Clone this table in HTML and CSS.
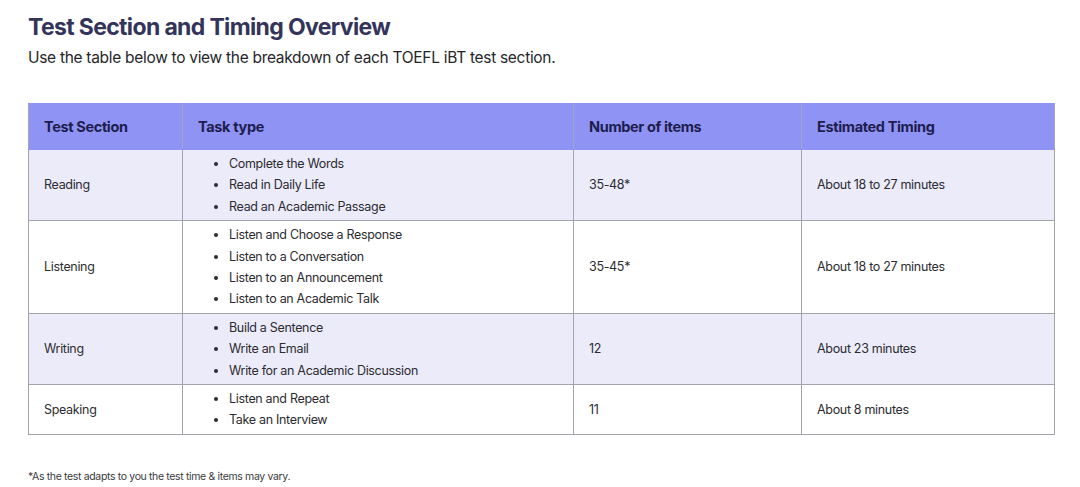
FILE: index.html
```html
<!DOCTYPE html>
<html>
<head>
<meta charset="utf-8">
<link rel="stylesheet" href="styles.css">
</head>
<body>
<div class="page">
  <h1 class="title">Test Section and Timing Overview</h1>
  <p class="intro">Use the table below to view the breakdown of each TOEFL iBT test section.</p>
  <table class="grid">
    <thead>
      <tr>
        <th class="c1">Test Section</th>
        <th class="c2">Task type</th>
        <th class="c3">Number of items</th>
        <th class="c4">Estimated Timing</th>
      </tr>
    </thead>
    <tbody>
      <tr class="tint">
        <td>Reading</td>
        <td><ul><li>Complete the Words</li><li>Read in Daily Life</li><li>Read an Academic Passage</li></ul></td>
        <td>35-48*</td>
        <td>About 18 to 27 minutes</td>
      </tr>
      <tr>
        <td>Listening</td>
        <td><ul><li>Listen and Choose a Response</li><li>Listen to a Conversation</li><li>Listen to an Announcement</li><li>Listen to an Academic Talk</li></ul></td>
        <td>35-45*</td>
        <td>About 18 to 27 minutes</td>
      </tr>
      <tr class="tint">
        <td>Writing</td>
        <td><ul><li>Build a Sentence</li><li>Write an Email</li><li>Write for an Academic Discussion</li></ul></td>
        <td>12</td>
        <td>About 23 minutes</td>
      </tr>
      <tr>
        <td>Speaking</td>
        <td><ul><li>Listen and Repeat</li><li>Take an Interview</li></ul></td>
        <td>11</td>
        <td>About 8 minutes</td>
      </tr>
    </tbody>
  </table>
  <p class="note">*As the test adapts to you the test time &amp; items may vary.</p>
</div>
</body>
</html>
```
FILE: styles.css
```css
html, body {
  margin: 0;
  padding: 0;
  background: #ffffff;
}
body {
  font-family: "Inter", "Liberation Sans", sans-serif;
  color: #2a2a2e;
}
.page {
  padding: 12px 26px 0 28px;
}
.title {
  margin: 0;
  font-size: 23px;
  line-height: 30px;
  font-weight: 700;
  color: #34345a;
  letter-spacing: -0.65px;
}
.intro {
  margin: 5px 0 0 0;
  font-size: 15.5px;
  line-height: 22px;
  color: #26262a;
  letter-spacing: -0.3px;
}
.grid {
  margin-top: 34px;
  width: 1027px;
  border-collapse: collapse;
  font-size: 12.5px;
  letter-spacing: -0.32px;
  color: #2c2c30;
}
.grid th, .grid td {
  border: 1px solid #a3a3ab;
  text-align: left;
  vertical-align: middle;
  padding: 3px 15px;
}
.grid th {
  background: #8f93f3;
  color: #1d1d4e;
  font-weight: 700;
  font-size: 14.5px;
  letter-spacing: -0.35px;
  height: 39px;
  border-color: #8f93f3 #a3a3c8;
  border-top-color: #8f93f3;
}
.c1 { width: 123px; }
.c2 { width: 360px; }
.c3 { width: 197px; }
.grid td {
  line-height: 21.4px;
}
.tint td {
  background: #ebebfa;
}
.grid ul {
  margin: 0;
  padding: 0 0 0 31px;
  list-style: disc;
}
.note {
  margin: 35px 0 0 0;
  font-size: 10.5px;
  color: #3a3a40;
  letter-spacing: -0.35px;
}
```
